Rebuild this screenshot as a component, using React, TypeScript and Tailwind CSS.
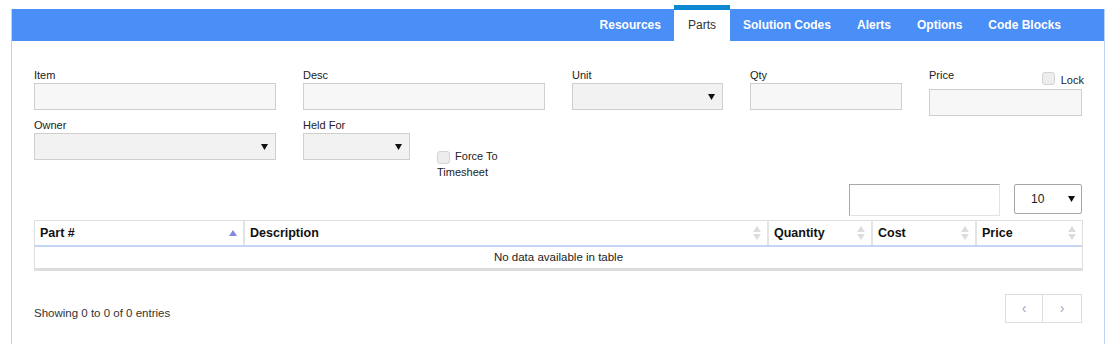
import React from "react";

const tabs = ["Resources", "Parts", "Solution Codes", "Alerts", "Options", "Code Blocks"];

const cols = [
  { name: "Part #", w: "w-[210px]", sort: "asc" },
  { name: "Description", w: "w-[524px]", sort: "both" },
  { name: "Quantity", w: "w-[104px]", sort: "both" },
  { name: "Cost", w: "w-[104px]", sort: "both" },
  { name: "Price", w: "flex-1", sort: "both" },
];

function Caret() {
  return (
    <svg width="7" height="6" viewBox="0 0 7 6" className="shrink-0">
      <path d="M0 0 L7 0 L3.5 6 Z" fill="#111" />
    </svg>
  );
}

function SortIcon({ kind }: { kind: string }) {
  if (kind === "asc") {
    return (
      <svg width="8" height="6" viewBox="0 0 8 6">
        <path d="M4 0 L8 6 L0 6 Z" fill="#8585e4" />
      </svg>
    );
  }
  return (
    <svg width="8" height="14" viewBox="0 0 8 14">
      <path d="M4 0 L8 6 L0 6 Z" fill="#dcdcdc" />
      <path d="M0 8 L8 8 L4 14 Z" fill="#dcdcdc" />
    </svg>
  );
}

function Box() {
  return <span className="inline-block w-[13px] h-[13px] rounded-[3px] border border-[#d3d3d3] bg-[#ededed] align-middle" />;
}

function Field({ label, w, select }: { label: string; w: string; select?: boolean }) {
  return (
    <div className={w}>
      <div className="h-[15px] text-[11px] leading-[15px] text-[#222]">{label}</div>
      <div className={`h-[27px] border border-[#cfcfcf] flex items-center justify-end pr-[7px] ${select ? "bg-[#f2f2f2]" : "bg-[#f7f7f7]"}`}>
        {select && <Caret />}
      </div>
    </div>
  );
}

export default function App() {
  return (
    <div className="w-[1109px] h-[344px] bg-white pt-[9px] overflow-hidden" style={{ fontFamily: '"Liberation Sans", Arial, sans-serif' }}>
      <div className="ml-[11px] w-[1094px] h-[400px] border-x border-[#bcd2f8]">
        {/* tab bar */}
        <div className="h-[32px] bg-[#4a8ef8] flex justify-end pr-[30px]">
          {tabs.map((t) =>
            t === "Parts" ? (
              <div key={t} className="-mt-[4px] h-[36px] px-[14px] bg-white border-t-[5px] border-[#0e88d3] text-[12px] text-[#333] flex items-center pb-[1px]">
                {t}
              </div>
            ) : (
              <div key={t} className="h-[32px] px-[13px] text-[12px] font-bold text-white flex items-center">
                {t}
              </div>
            )
          )}
        </div>

        <div className="pl-[22px] pr-[21px] pt-[27px]">
          {/* row 1 */}
          <div className="flex gap-[27px]">
            <Field label="Item" w="w-[242px]" />
            <Field label="Desc" w="w-[242px]" />
            <Field label="Unit" w="w-[151px]" select />
            <Field label="Qty" w="w-[152px]" />
            <div className="w-[153px]">
              <div className="h-[21px] flex justify-between text-[11px] text-[#222]">
                <span className="leading-[15px]">Price</span>
                <span className="flex items-center gap-[6px] pt-[3px] h-[18px] -mr-[2px]">
                  <Box />
                  <span className="leading-[13px] mt-[4px]">Lock</span>
                </span>
              </div>
              <div className="h-[27px] border border-[#cfcfcf] bg-[#f7f7f7]" />
            </div>
          </div>

          {/* row 2 */}
          <div className="flex gap-[27px] mt-[2px]">
            <Field label="Owner" w="w-[242px]" select />
            <Field label="Held For" w="w-[107px]" select />
            <div className="w-[70px] pt-[30px] text-[11px] leading-[16px] text-[#222]">
              <Box /> <span className="ml-[2px]">Force To Timesheet</span>
            </div>
          </div>

          {/* search + length */}
          <div className="flex justify-end gap-[14px] mt-[4px] pr-[1px]">
            <div className="w-[151px] h-[32px] border border-[#a9a9a9] border-b-[#e3e3e3] border-r-[#e3e3e3] bg-white" />
            <div className="w-[68px] h-[30px] border border-[#a6a6a6] rounded-[2px] bg-white flex items-center justify-between pl-[16px] pr-[6px] text-[12px] text-[#222]">
              <span>10</span>
              <Caret />
            </div>
          </div>

          {/* table */}
          <div className="mt-[4px] w-[1049px] border border-[#dedede]">
            <div className="flex h-[26px] border-b-2 border-[#c4d6f4]">
              {cols.map((c, i) => (
                <div
                  key={c.name}
                  className={`${c.w} flex items-center justify-between pl-[5px] pr-[6px] text-[12.5px] font-bold text-[#111] ${i < cols.length - 1 ? "border-r-2 border-[#e4e4e4]" : ""}`}
                >
                  <span>{c.name}</span>
                  <SortIcon kind={c.sort} />
                </div>
              ))}
            </div>
            <div className="h-[23px] flex items-center justify-center text-[11.5px] text-[#222] border-b-2 border-[#dcdcdc]">
              No data available in table
            </div>
          </div>

          {/* footer */}
          <div className="flex justify-between items-center mt-[23px] pr-[1px]">
            <span className="text-[11.5px] text-[#333] mt-[10px]">Showing 0 to 0 of 0 entries</span>
            <div className="flex border border-[#dddddd] h-[29px]">
              <span className="w-[37px] flex items-center justify-center text-[14px] text-[#a6a6b8] border-r border-[#dddddd]">‹</span>
              <span className="w-[38px] flex items-center justify-center text-[14px] text-[#a6a6b8]">›</span>
            </div>
          </div>
        </div>
      </div>
    </div>
  );
}
